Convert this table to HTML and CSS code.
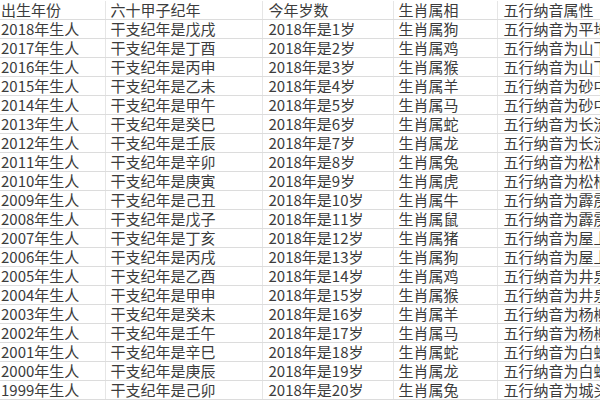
FILE: index.html
```html
<!DOCTYPE html>
<html lang="zh">
<head>
<meta charset="utf-8">
<link rel="stylesheet" href="styles.css">
</head>
<body>
<table class="sheet">
<colgroup><col class="c1"><col class="c2"><col class="c3"><col class="c4"><col class="c5"></colgroup>
<tbody>
<tr><td>出生年份</td><td>六十甲子纪年</td><td>今年岁数</td><td>生肖属相</td><td>五行纳音属性</td></tr>
<tr><td>2018年生人</td><td>干支纪年是戊戌</td><td>2018年是1岁</td><td>生肖属狗</td><td>五行纳音为平地木</td></tr>
<tr><td>2017年生人</td><td>干支纪年是丁酉</td><td>2018年是2岁</td><td>生肖属鸡</td><td>五行纳音为山下火</td></tr>
<tr><td>2016年生人</td><td>干支纪年是丙申</td><td>2018年是3岁</td><td>生肖属猴</td><td>五行纳音为山下火</td></tr>
<tr><td>2015年生人</td><td>干支纪年是乙未</td><td>2018年是4岁</td><td>生肖属羊</td><td>五行纳音为砂中金</td></tr>
<tr><td>2014年生人</td><td>干支纪年是甲午</td><td>2018年是5岁</td><td>生肖属马</td><td>五行纳音为砂中金</td></tr>
<tr><td>2013年生人</td><td>干支纪年是癸巳</td><td>2018年是6岁</td><td>生肖属蛇</td><td>五行纳音为长流水</td></tr>
<tr><td>2012年生人</td><td>干支纪年是壬辰</td><td>2018年是7岁</td><td>生肖属龙</td><td>五行纳音为长流水</td></tr>
<tr><td>2011年生人</td><td>干支纪年是辛卯</td><td>2018年是8岁</td><td>生肖属兔</td><td>五行纳音为松柏木</td></tr>
<tr><td>2010年生人</td><td>干支纪年是庚寅</td><td>2018年是9岁</td><td>生肖属虎</td><td>五行纳音为松柏木</td></tr>
<tr><td>2009年生人</td><td>干支纪年是己丑</td><td>2018年是10岁</td><td>生肖属牛</td><td>五行纳音为霹雳火</td></tr>
<tr><td>2008年生人</td><td>干支纪年是戊子</td><td>2018年是11岁</td><td>生肖属鼠</td><td>五行纳音为霹雳火</td></tr>
<tr><td>2007年生人</td><td>干支纪年是丁亥</td><td>2018年是12岁</td><td>生肖属猪</td><td>五行纳音为屋上土</td></tr>
<tr><td>2006年生人</td><td>干支纪年是丙戌</td><td>2018年是13岁</td><td>生肖属狗</td><td>五行纳音为屋上土</td></tr>
<tr><td>2005年生人</td><td>干支纪年是乙酉</td><td>2018年是14岁</td><td>生肖属鸡</td><td>五行纳音为井泉水</td></tr>
<tr><td>2004年生人</td><td>干支纪年是甲申</td><td>2018年是15岁</td><td>生肖属猴</td><td>五行纳音为井泉水</td></tr>
<tr><td>2003年生人</td><td>干支纪年是癸未</td><td>2018年是16岁</td><td>生肖属羊</td><td>五行纳音为杨柳木</td></tr>
<tr><td>2002年生人</td><td>干支纪年是壬午</td><td>2018年是17岁</td><td>生肖属马</td><td>五行纳音为杨柳木</td></tr>
<tr><td>2001年生人</td><td>干支纪年是辛巳</td><td>2018年是18岁</td><td>生肖属蛇</td><td>五行纳音为白蜡金</td></tr>
<tr><td>2000年生人</td><td>干支纪年是庚辰</td><td>2018年是19岁</td><td>生肖属龙</td><td>五行纳音为白蜡金</td></tr>
<tr><td>1999年生人</td><td>干支纪年是己卯</td><td>2018年是20岁</td><td>生肖属兔</td><td>五行纳音为城头土</td></tr>
</tbody>
</table>
</body>
</html>
```
FILE: styles.css
```css
html, body {
  margin: 0;
  padding: 0;
  background: #ffffff;
  overflow: hidden;
  width: 600px;
  height: 400px;
}
.sheet {
  border-collapse: collapse;
  table-layout: fixed;
  width: 600px;
  margin-top: 1px;
  font-family: "Noto Sans CJK SC", "Liberation Sans", sans-serif;
  font-size: 15px;
  color: #3c3c3c;
}
.c1 { width: 105px; }
.c2 { width: 157px; }
.c3 { width: 131px; }
.c4 { width: 104px; }
.c5 { width: 103px; }
.sheet td {
  height: 18px;
  line-height: 18px;
  padding: 0 0 0 6px;
  border-bottom: 1px solid #dcdcdc;
  border-right: 1px solid #e6e6e6;
  white-space: nowrap;
}
.sheet td:first-child {
  padding-left: 1px;
}
.sheet td:nth-child(2),
.sheet td:nth-child(4) {
  padding-left: 5px;
}
.sheet td:last-child {
  overflow: hidden;
  border-right: none;
}
```
